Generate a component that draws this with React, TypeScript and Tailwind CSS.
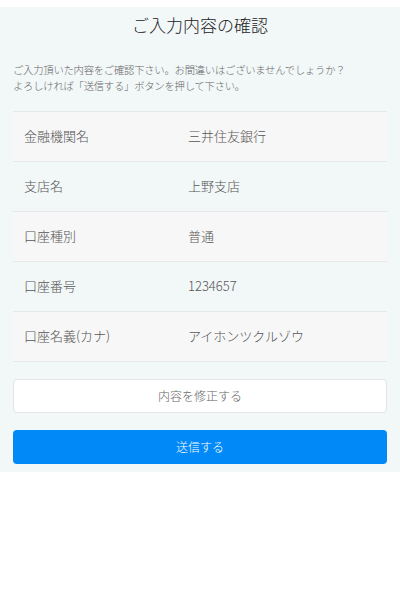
import React from 'react';

interface Row {
  label: string;
  value: string;
}

const rows: Row[] = [
  { label: '金融機関名', value: '三井住友銀行' },
  { label: '支店名', value: '上野支店' },
  { label: '口座種別', value: '普通' },
  { label: '口座番号', value: '1234657' },
  { label: '口座名義(カナ)', value: 'アイホンツクルゾウ' },
];

const App: React.FC = () => {
  return (
    <div
      className="w-[400px] h-[600px] bg-white pt-[7px]"
      style={{ fontFamily: '"Noto Sans CJK JP", "Noto Sans", sans-serif' }}
    >
      <div className="bg-[#f2f7f8] px-[13px] pb-[8px] font-light">
        <h1 className="pt-[5px] h-[40px] text-center text-[17px] leading-[26px] text-[#222]">
          ご入力内容の確認
        </h1>

        <p className="mt-[15px] text-[10.3px] leading-[16px] text-[#666] tracking-[-0.2px]">
          ご入力頂いた内容をご確認下さい。お間違いはございませんでしょうか？
          <br />
          よろしければ「送信する」ボタンを押して下さい。
        </p>

        <div className="mt-[17px] border-t border-[#e6e8e9]">
          {rows.map((row, i) => (
            <div
              key={row.label}
              className={`flex items-center h-[50px] border-b border-[#e6e8e9] text-[13px] text-[#555] pb-[1px] ${
                i % 2 === 0 ? 'bg-[#f7f7f7]' : ''
              }`}
            >
              <div className="w-[175px] pl-[11px]">{row.label}</div>
              <div className="flex-1">{row.value}</div>
            </div>
          ))}
        </div>

        <button className="mt-[17px] w-full h-[34px] bg-white border border-[#e3e5e6] rounded-[4px] text-[12px] text-[#666]">
          内容を修正する
        </button>

        <button className="mt-[17px] w-full h-[34px] bg-[#0089f7] rounded-[4px] text-[12px] text-white">
          送信する
        </button>
      </div>
    </div>
  );
};

export default App;
